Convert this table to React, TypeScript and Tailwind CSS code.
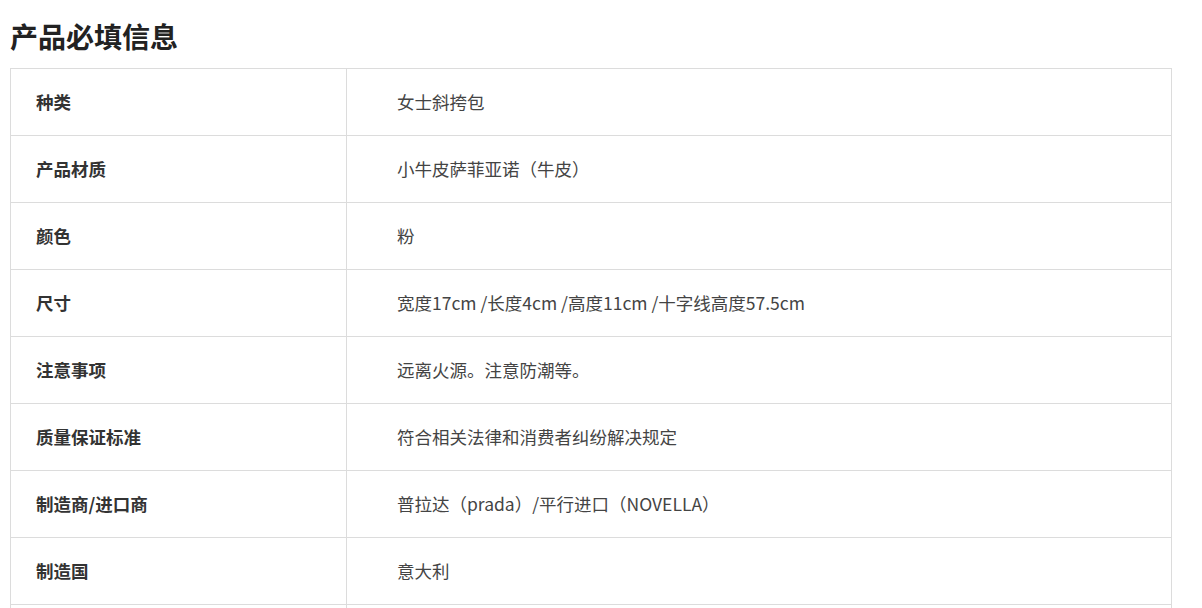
const rows: [string, string][] = [
  ["种类", "女士斜挎包"],
  ["产品材质", "小牛皮萨菲亚诺（牛皮）"],
  ["颜色", "粉"],
  ["尺寸", "宽度17cm /长度4cm /高度11cm /十字线高度57.5cm"],
  ["注意事项", "远离火源。注意防潮等。"],
  ["质量保证标准", "符合相关法律和消费者纠纷解决规定"],
  ["制造商/进口商", "普拉达（prada）/平行进口（NOVELLA）"],
  ["制造国", "意大利"],
  ["", ""],
];

export default function App() {
  return (
    <div
      className="bg-white w-[1202px] h-[608px] overflow-hidden px-[10px] text-[#333]"
      style={{ fontFamily: '"Noto Sans CJK SC", "Noto Sans", sans-serif' }}
    >
      <h2 className="text-[28px] font-bold leading-[38px] pt-[17px] pb-[13px] text-[#222]">产品必填信息</h2>
      <table className="w-[1162px] border-collapse table-fixed">
        <tbody>
          {rows.map(([label, value], i) => (
            <tr key={i} className="h-[67px]">
              <th className="w-[336px] border border-[#dcdcdc] pl-[25px] text-left text-[17.5px] font-bold text-[#333]">
                {label}
              </th>
              <td className="border border-[#dcdcdc] pl-[50px] text-left text-[17.5px] font-normal text-[#444]">
                {value}
              </td>
            </tr>
          ))}
        </tbody>
      </table>
    </div>
  );
}
